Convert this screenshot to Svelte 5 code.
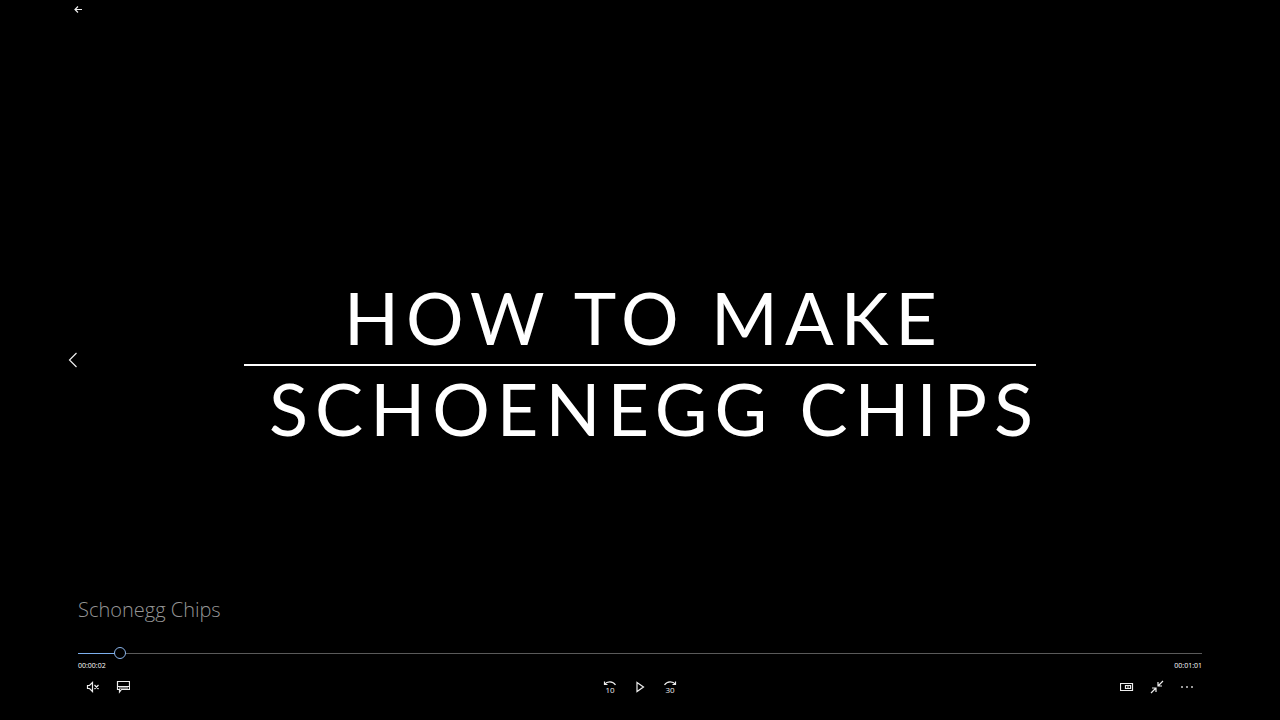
<script>
  const duration = 61;
  let position = $state(2);

  const pad = (n) => String(n).padStart(2, '0');
  const clock = (s) => `${pad(Math.floor(s / 3600))}:${pad(Math.floor(s / 60) % 60)}:${pad(Math.floor(s) % 60)}`;
  const played = $derived((position / duration) * 100);
</script>

<main class="player">
  <section class="stage">
    <button class="previous" aria-label="Previous">
      <svg width="10" height="16" viewBox="0 0 10 16"><path d="M8.5 1 L1.5 8 L8.5 15" /></svg>
    </button>
    <h1 class="card">
      <span class="line first">HOW TO MAKE</span>
      <span class="line second">SCHOENEGG CHIPS</span>
    </h1>
  </section>

  <header class="top">
    <button class="back" aria-label="Back">
      <svg width="8" height="8" viewBox="0 0 8 8"><path d="M8 4.5 H1 M4 1.5 L1 4.5 L4 7.5" /></svg>
    </button>
  </header>

  <footer class="controls">
    <h2 class="name">Schonegg Chips</h2>
    <input
      class="seek"
      type="range"
      aria-label="Seek"
      min="0"
      max={duration}
      bind:value={position}
      style="--played: {played}%"
    />
    <div class="times">
      <time>{clock(position)}</time>
      <time>{clock(duration)}</time>
    </div>
    <div class="buttons">
      <div class="group">
        <button aria-label="Unmute">
          <svg width="14" height="14" viewBox="0 0 14 14"><path d="M1.5 5.5 H3.5 L6.5 2.5 V11.5 L3.5 8.5 H1.5 Z M8.5 5 L12.5 9 M12.5 5 L8.5 9" /></svg>
        </button>
        <button aria-label="Subtitles">
          <svg width="14" height="14" viewBox="0 0 14 14"><path d="M1.5 1.5 H13.5 V9.5 H5.5 L3.5 12 V9.5 H1.5 Z M1.5 6.5 H13.5 M3 8 H12" /></svg>
        </button>
      </div>
      <div class="group">
        <button aria-label="Skip back 10 seconds">
          <svg width="14" height="14" viewBox="0 0 14 14"><path d="M1.5 1.5 V4.5 H4.5 M1.5 4.5 C4 1 10 1 12.5 5" /><text x="7" y="13">10</text></svg>
        </button>
        <button aria-label="Play">
          <svg width="14" height="14" viewBox="0 0 14 14"><path d="M4 2.5 L10.5 7 L4 11.5 Z" /></svg>
        </button>
        <button aria-label="Skip forward 30 seconds">
          <svg width="14" height="14" viewBox="0 0 14 14"><path d="M12.5 1.5 V4.5 H9.5 M12.5 4.5 C10 1 4 1 1.5 5" /><text x="7" y="13">30</text></svg>
        </button>
      </div>
      <div class="group end">
        <button aria-label="Play in mini view">
          <svg width="14" height="14" viewBox="0 0 14 14"><path d="M.5 3.5 H12.5 V10.5 H.5 Z M5.5 5.5 H10.5 V8.5 H5.5 Z M7 7 H9" /></svg>
        </button>
        <button aria-label="Exit full screen">
          <svg width="14" height="14" viewBox="0 0 14 14"><path d="M13 1 L8 6 M8 2 V6 H12 M1 13 L6 8 M2 8 H6 V12" /></svg>
        </button>
        <button aria-label="More">
          <svg class="dots" width="14" height="14" viewBox="0 0 14 14"><path d="M1 6 h2 v2 h-2 z M6 6 h2 v2 h-2 z M11 6 h2 v2 h-2 z" /></svg>
        </button>
      </div>
    </div>
  </footer>
</main>

<style>
  :global(body) {
    margin: 0;
    background: #000;
  }

  .player {
    position: relative;
    display: flex;
    flex-direction: column;
    justify-content: space-between;
    min-height: 100vh;
    color: #fff;
    background: #000;
    font-family: 'Open Sans', 'Noto Sans', sans-serif;
  }

  /* The video frame fills the window behind the transport controls. */
  .stage {
    position: absolute;
    inset: 0;
    display: grid;
    grid-template-columns: 30px auto 30px;
    justify-content: space-between;
    align-items: center;
    padding: 0 58px;
  }

  .card {
    display: flex;
    flex-direction: column;
    margin: 0;
    padding-top: 10px;
    width: 792px;
    max-width: 100%;
    font-family: Lato, sans-serif;
    font-size: 72px;
    font-weight: 400;
    line-height: 84px;
    letter-spacing: 7px;
    white-space: nowrap;
  }

  .line {
    padding-bottom: 5px;
  }

  .first {
    padding-left: 8px;
    border-bottom: 2px solid #fff;
    text-align: center;
  }

  /* The tracking after the last letter hangs past the rule. */
  .second {
    margin-right: -4px;
    text-align: right;
  }

  button {
    display: grid;
    place-items: center;
    width: 30px;
    height: 30px;
    padding: 0;
    border: 0;
    color: inherit;
    background: none;
    cursor: pointer;
  }

  svg {
    display: block;
    fill: none;
    stroke: #eee;
    stroke-width: 1.2;
  }

  svg text {
    fill: #eee;
    stroke: none;
    font: 400 8px 'Open Sans', sans-serif;
    text-anchor: middle;
  }

  .dots {
    fill: #999;
    stroke: none;
  }

  .top {
    position: relative;
    padding: 0 63px;
  }

  .top .back {
    height: 18px;
  }

  .controls {
    position: relative;
    padding: 0 78px 18px;
  }

  .name {
    margin: 0 0 24px;
    color: #959595;
    font-size: 20px;
    font-weight: 300;
    line-height: 26px;
  }

  .seek {
    display: block;
    width: 100%;
    height: 12px;
    margin: 0;
    appearance: none;
    background: none;
    cursor: pointer;
  }

  .seek::-webkit-slider-runnable-track {
    height: 1px;
    background: linear-gradient(to right, #7db0ee var(--played), #5a5a5a var(--played));
  }

  .seek::-webkit-slider-thumb {
    box-sizing: border-box;
    width: 12px;
    height: 12px;
    margin-top: -6px;
    appearance: none;
    border: 1px solid #8ab4ea;
    border-radius: 50%;
    background: #000;
  }

  .times {
    display: flex;
    justify-content: space-between;
    padding-top: 1px;
    font-size: 7px;
    line-height: 12px;
  }

  .buttons {
    display: grid;
    grid-template-columns: 1fr auto 1fr;
  }

  .group {
    display: flex;
  }

  .end {
    justify-content: flex-end;
  }
</style>
